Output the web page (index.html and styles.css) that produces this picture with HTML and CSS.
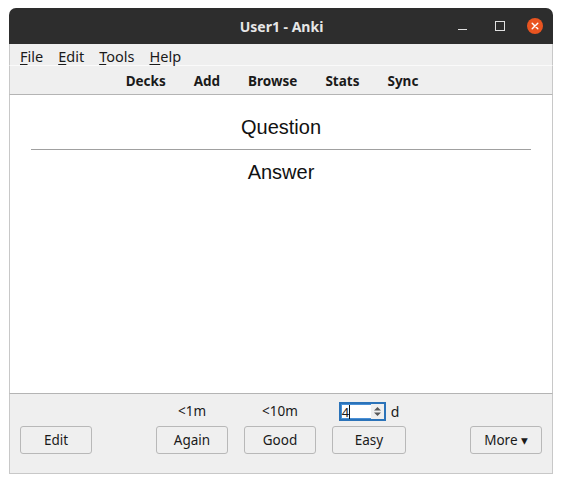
FILE: index.html
```html
<!DOCTYPE html>
<html>
<head>
<meta charset="utf-8">
<link rel="stylesheet" href="styles.css">
</head>
<body>
<div class="window">
  <div class="titlebar">
    <span class="title">User1 - Anki</span>
    <div class="controls">
      <span class="ctl min"></span>
      <span class="ctl max"></span>
      <span class="ctl close">
        <svg width="16" height="16" viewBox="0 0 16 16"><circle cx="8" cy="8" r="8" fill="#e95420"/><path d="M5.2 5.2 L10.8 10.8 M10.8 5.2 L5.2 10.8" stroke="#fff" stroke-width="1.4" stroke-linecap="round"/></svg>
      </span>
    </div>
  </div>
  <div class="menubar">
    <span class="menu"><u>F</u>ile</span>
    <span class="menu"><u>E</u>dit</span>
    <span class="menu"><u>T</u>ools</span>
    <span class="menu"><u>H</u>elp</span>
  </div>
  <div class="toolbar">
    <span class="tb">Decks</span>
    <span class="tb">Add</span>
    <span class="tb">Browse</span>
    <span class="tb">Stats</span>
    <span class="tb">Sync</span>
  </div>
  <div class="card">
    <div class="q">Question</div>
    <hr class="sep">
    <div class="a">Answer</div>
  </div>
  <div class="bottom">
    <div class="col left"><button class="btn">Edit</button></div>
    <div class="answers">
      <div class="col"><span class="lbl">&lt;1m</span><button class="btn">Again</button></div>
      <div class="col"><span class="lbl">&lt;10m</span><button class="btn">Good</button></div>
      <div class="col"><span class="lbl spinrow"><span class="spin"><span class="val">4</span><span class="arrows"><svg width="9" height="11" viewBox="0 0 9 11"><path d="M1 4.5 L4.5 1 L8 4.5 Z M1 6.5 L4.5 10 L8 6.5 Z" fill="#5a5a5a"/></svg></span></span><span class="unit">d</span></span><button class="btn easy">Easy</button></div>
    </div>
    <div class="col right"><button class="btn">More &#9662;</button></div>
  </div>
</div>
</body>
</html>
```

FILE: styles.css
```css
* { box-sizing: border-box; }
html, body { margin: 0; padding: 0; background: #ffffff; }
body { font-family: "Noto Sans", "DejaVu Sans", sans-serif; }
.window {
  margin: 8px 0 0 9px;
  width: 544px;
  height: 466px;
  display: flex;
  flex-direction: column;
  border-radius: 7px 7px 0 0;
  overflow: hidden;
  background: #efefef;
}
.titlebar {
  height: 36px;
  background: #2d2d2d;
  display: flex;
  align-items: center;
  justify-content: center;
  position: relative;
  flex: none;
}
.title {
  color: #e6e6e6;
  font-weight: bold;
  font-size: 14px;
  margin-left: 1px;
}
.controls {
  position: absolute;
  right: 10px;
  top: 10px;
  display: flex;
  align-items: center;
  gap: 0;
}
.ctl { display: block; }
.min { width: 9px; height: 1px; background: #e0e0e0; margin-top: 6px; margin-right: 28px; }
.max { width: 10px; height: 10px; border: 1px solid #e0e0e0; margin-right: 22px; }
.close { width: 16px; height: 16px; }
.close svg { display: block; }
.menubar {
  height: 22px;
  flex: none;
  display: flex;
  align-items: center;
  padding-left: 10px;
  padding-top: 2px;
  border-left: 1px solid #c8c8c8;
  border-right: 1px solid #c8c8c8;
  border-bottom: 1px solid #fafafa;
  font-size: 14.5px;
  color: #1a1a1a;
}
.menu { margin-right: 15px; }
.menu u { text-decoration-thickness: 1px; text-underline-offset: 2px; }
.toolbar {
  height: 29px;
  flex: none;
  display: flex;
  align-items: center;
  justify-content: center;
  gap: 28px;
  padding-right: 18px;
  padding-top: 2px;
  border-left: 1px solid #c8c8c8;
  border-right: 1px solid #c8c8c8;
  border-bottom: 1px solid #b4b4b4;
  font-size: 13.5px;
  font-weight: bold;
  color: #1a1a1a;
}
.card {
  flex: 1;
  background: #ffffff;
  border-left: 1px solid #c8c8c8;
  border-right: 1px solid #c8c8c8;
  border-bottom: 1px solid #b4b4b4;
  padding: 21px 20px 0 20px;
  font-family: "Liberation Sans", Arial, sans-serif;
  font-size: 20px;
  color: #111;
  text-align: center;
}
.q { line-height: 23px; }
.sep { border: none; border-top: 1px solid #a0a0a0; margin: 10px 1px 11px 1px; height: 0; }
.a { line-height: 23px; }
.bottom {
  height: 80px;
  flex: none;
  border-left: 1px solid #c8c8c8;
  border-right: 1px solid #c8c8c8;
  border-bottom: 1px solid #c8c8c8;
  display: flex;
  align-items: flex-start;
  padding: 8px 10px 0 10px;
  font-size: 13.5px;
  color: #1a1a1a;
}
.col { display: flex; flex-direction: column; align-items: center; }
.left, .right { padding-top: 24px; }
.right { margin-left: auto; }
.answers { display: flex; gap: 16px; margin-left: 64px; }
.lbl { height: 19px; line-height: 19px; margin-bottom: 5px; }
.btn {
  font-family: "Noto Sans", "DejaVu Sans", sans-serif;
  font-size: 13.5px;
  color: #1a1a1a;
  width: 72px;
  height: 28px;
  background: #efefef;
  border: 1px solid #b8b8b8;
  border-radius: 3px;
  padding: 0;
}
.easy { width: 74px; }
.spinrow { display: flex; align-items: center; gap: 5px; }
.spin {
  width: 47px;
  height: 19px;
  border: 2px solid #2b73b9;
  background: #fff;
  display: flex;
  align-items: center;
  justify-content: space-between;
  box-shadow: inset 0 0 0 1px #4a90d6;
}
.val { padding-left: 1px; border-right: 1px solid #111; line-height: 14px; font-size: 13px; }
.arrows { width: 13px; height: 15px; background: #efefef; display: flex; align-items: center; justify-content: center; }
.arrows svg { display: block; }
.unit { font-size: 14px; }
```
